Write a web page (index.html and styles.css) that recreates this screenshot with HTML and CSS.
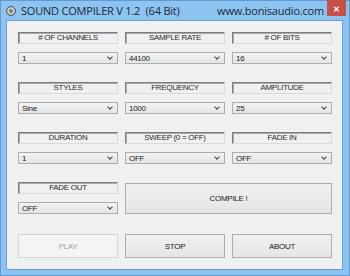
FILE: index.html
```html
<!DOCTYPE html>
<html lang="en">
<head>
    <meta charset="UTF-8">
    <title>Sound Compiler</title>
    <link rel="stylesheet" href="styles.css">
</head>
<body>
    <div class="window">
        <div class="titlebar">
            <span class="app-icon"></span>
            <span class="title">SOUND COMPILER V 1.2&nbsp; (64 Bit)</span>
            <span class="site">www.bonisaudio.com</span>
            <span class="close-btn">&#x2715;</span>
        </div>

        <div class="client">
            <div class="panel">
                <div class="field">
                    <div class="caption"># OF CHANNELS</div>
                    <div class="combo"><span>1</span><i class="arrow"></i></div>
                </div>
                <div class="field">
                    <div class="caption">SAMPLE RATE</div>
                    <div class="combo"><span>44100</span><i class="arrow"></i></div>
                </div>
                <div class="field">
                    <div class="caption"># OF BITS</div>
                    <div class="combo"><span>16</span><i class="arrow"></i></div>
                </div>

                <div class="field">
                    <div class="caption">STYLES</div>
                    <div class="combo"><span>Sine</span><i class="arrow"></i></div>
                </div>
                <div class="field">
                    <div class="caption">FREQUENCY</div>
                    <div class="combo"><span>1000</span><i class="arrow"></i></div>
                </div>
                <div class="field">
                    <div class="caption">AMPLITUDE</div>
                    <div class="combo"><span>25</span><i class="arrow"></i></div>
                </div>

                <div class="field">
                    <div class="caption">DURATION</div>
                    <div class="combo"><span>1</span><i class="arrow"></i></div>
                </div>
                <div class="field">
                    <div class="caption">SWEEP (0 = OFF)</div>
                    <div class="combo"><span>OFF</span><i class="arrow"></i></div>
                </div>
                <div class="field">
                    <div class="caption">FADE IN</div>
                    <div class="combo"><span>OFF</span><i class="arrow"></i></div>
                </div>

                <div class="field">
                    <div class="caption">FADE OUT</div>
                    <div class="combo"><span>OFF</span><i class="arrow"></i></div>
                </div>
                <button class="btn compile">COMPILE !</button>
            </div>

            <div class="actions">
                <button class="btn" disabled>PLAY</button>
                <button class="btn">STOP</button>
                <button class="btn">ABOUT</button>
            </div>
        </div>
    </div>
</body>
</html>
```

FILE: styles.css
```css
body, html {
    margin: 0;
    padding: 0;
}
.window {
    width: 350px;
    height: 276px;
    box-sizing: border-box;
    background: #8cc3f0;
    border: 1px solid #5e9ad6;
    display: flex;
    flex-direction: column;
    font-family: 'Liberation Sans', Arial, sans-serif;
}
.titlebar {
    height: 19px;
    display: flex;
    align-items: center;
    position: relative;
    color: #1e2a36;
    font-family: 'Open Sans', 'Liberation Sans', sans-serif;
    font-size: 11px;
}
.app-icon {
    width: 10px;
    height: 10px;
    border-radius: 50%;
    background: #7a7f86;
    border: 1px solid #555;
    box-sizing: border-box;
    margin: 0 5px 0 5px;
    box-shadow: inset 0 0 0 2px #c9ccd0;
}
.title {
    letter-spacing: -0.2px;
}
.site {
    margin-left: auto;
    margin-right: 25px;
    letter-spacing: -0.2px;
}
.close-btn {
    position: absolute;
    top: -1px;
    right: 3px;
    width: 19px;
    height: 16px;
    background: #c7504b;
    color: #fff;
    font-size: 8px;
    font-weight: bold;
    display: flex;
    align-items: center;
    justify-content: center;
}
.client {
    flex: 1;
    margin: 0 6px 5px 5px;
    background: #f0f0f0;
    border: 1px solid #6b9fd6;
    padding: 11px 0 0 11px;
}
.panel {
    display: grid;
    grid-template-columns: repeat(3, 100px);
    column-gap: 7px;
    row-gap: 18px;
}
.field {
    display: flex;
    flex-direction: column;
    gap: 8px;
}
.caption {
    height: 12px;
    box-sizing: border-box;
    border-top: 1px solid #7d7d7d;
    border-left: 1px solid #7d7d7d;
    border-bottom: 1px solid #dadada;
    border-right: 1px solid #dadada;
    box-shadow: inset 1px 1px 0 #a9a9a9;
    font-size: 8px;
    line-height: 10px;
    text-align: center;
    color: #2b2b2b;
    letter-spacing: -0.3px;
}
.combo {
    height: 12px;
    box-sizing: border-box;
    border: 1px solid #adadad;
    background: linear-gradient(#f2f2f2, #e5e5e5);
    display: flex;
    align-items: center;
    padding: 0 5px 0 3px;
    font-size: 8px;
    color: #1a1a1a;
    letter-spacing: -0.3px;
}
.arrow {
    margin-left: auto;
    width: 3px;
    height: 3px;
    border-right: 1px solid #444;
    border-bottom: 1px solid #444;
    transform: rotate(45deg);
    margin-top: -2px;
}
.btn {
    font-family: 'Liberation Sans', Arial, sans-serif;
    font-size: 8px;
    color: #222;
    letter-spacing: -0.3px;
    border: 1px solid #adadad;
    background: linear-gradient(#f0f0f0, #e5e5e5);
    padding: 0;
    margin: 0;
}
.btn:disabled {
    color: #a3a3a3;
    border-color: #d5d5d5;
    background: #f4f4f4;
}
.compile {
    grid-column: span 2;
    height: 31px;
    margin-top: 1px;
}
.actions {
    display: grid;
    grid-template-columns: repeat(3, 100px);
    column-gap: 7px;
    margin-top: 20px;
}
.actions .btn {
    height: 24px;
}
```
